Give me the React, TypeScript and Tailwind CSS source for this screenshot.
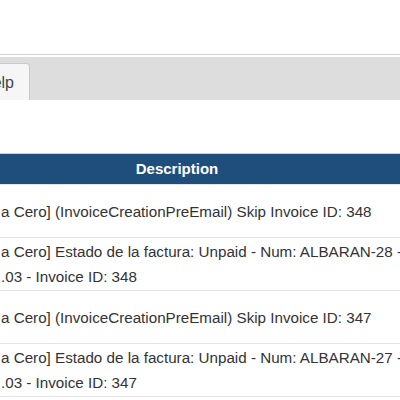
import React from 'react';

const ROWS: string[][] = [
  ['a Cero] (InvoiceCreationPreEmail) Skip Invoice ID: 348'],
  ['a Cero] Estado de la factura: Unpaid - Num: ALBARAN-28 - Total', '.03 - Invoice ID: 348'],
  ['a Cero] (InvoiceCreationPreEmail) Skip Invoice ID: 347'],
  ['a Cero] Estado de la factura: Unpaid - Num: ALBARAN-27 - Total', '.03 - Invoice ID: 347'],
];

export default function App() {
  return (
    <div className="w-[400px] h-[400px] overflow-hidden bg-white font-['Liberation_Sans',Arial,sans-serif] text-[#333]">
      <div className="h-[54px]" />
      <div className="h-px bg-[#cfcfcf]" />
      <div className="h-[2px]" />

      {/* Tabs */}
      <div className="h-[43px] bg-[#dddddd] pt-[6px] flex">
        <div className="w-[30px] h-[37px] bg-[#f6f6f6] border border-l-0 border-b-0 border-[#c8c8c8] rounded-tr-[4px] flex items-center justify-end pr-[15px] pt-[2px] text-[16px] text-[#444]">
          <span className="whitespace-nowrap">elp</span>
        </div>
      </div>

      <div className="h-[53px]" />

      {/* Table */}
      <div className="border-t border-[#c9d3de]">
        <div className="h-[30px] bg-[#1f4e7d] flex items-center justify-center pr-[46px] text-white font-bold text-[15px]">
          Description
        </div>
        <div className="h-px bg-[#dfe4ea]" />
        {ROWS.map((lines, i) => (
          <div
            key={i}
            className="h-[53px] border-b border-[#e3e3e3] flex flex-col justify-center text-[15.2px] leading-[25px] whitespace-nowrap pl-px"
          >
            {lines.map((l, j) => (
              <div key={j}>{l}</div>
            ))}
          </div>
        ))}
      </div>
    </div>
  );
}
